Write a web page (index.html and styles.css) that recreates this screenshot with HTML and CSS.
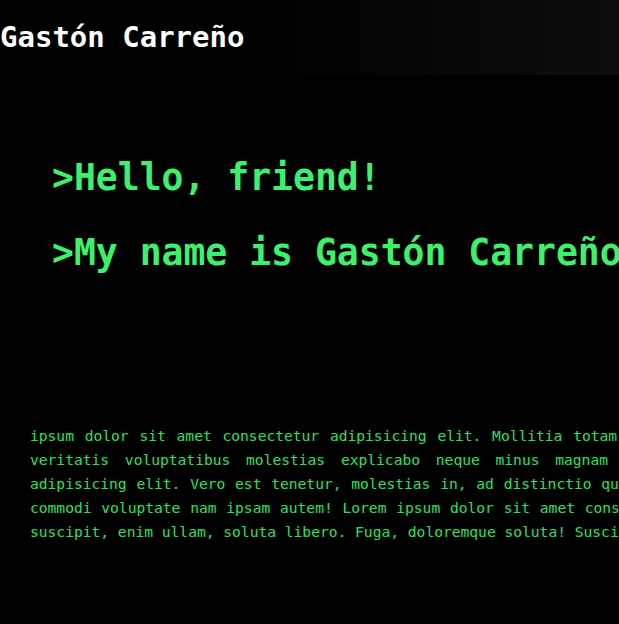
FILE: index.html
```html
<!DOCTYPE html>
<html lang="es">
<head>
<meta charset="utf-8">
<title>Gastón Carreño</title>
<link rel="stylesheet" href="styles.css">
</head>
<body>
<header class="topbar">
  <span class="brand">Gastón Carreño</span>
</header>
<main>
  <section class="hero">
    <h1 class="line">&gt;Hello, friend!</h1>
    <h1 class="line">&gt;My name is Gastón Carreño</h1>
  </section>
  <section class="about">
    <p class="text">
      <span class="row r1">ipsum dolor sit amet consectetur adipisicing elit. Mollitia totam</span>
      <span class="row r2">veritatis voluptatibus molestias explicabo neque minus magnam rem</span>
      <span class="row r3">adipisicing elit. Vero est tenetur, molestias in, ad distinctio quo</span>
      <span class="row r4">commodi voluptate nam ipsam autem! Lorem ipsum dolor sit amet consectetur</span>
      <span class="row r5">suscipit, enim ullam, soluta libero. Fuga, doloremque soluta! Suscipit</span>
    </p>
  </section>
</main>
</body>
</html>
```
FILE: styles.css
```css
html, body {
  margin: 0;
  padding: 0;
  background: #000;
  overflow: hidden;
}
body {
  font-family: "DejaVu Sans Mono", monospace;
  width: 619px;
  height: 624px;
}
.topbar {
  height: 75px;
  display: flex;
  align-items: center;
  background: linear-gradient(to right, #000 0%, #000 40%, #0e0c0e 100%);
}
.brand {
  color: #fff;
  font-weight: bold;
  font-size: 29px;
  line-height: 1;
  white-space: nowrap;
}
.hero {
  padding: 82px 0 0 52px;
  display: flex;
  flex-direction: column;
  gap: 33px;
}
.line {
  margin: 0;
  color: #3cf26a;
  font-size: 36.4px;
  line-height: 42px;
  font-weight: bold;
  white-space: nowrap;
}
.about {
  padding: 150px 0 0 30px;
}
.text {
  margin: 0;
  color: #2ee05a;
  font-size: 14.6px;
  line-height: 24px;
}
.row {
  display: block;
  white-space: nowrap;
}
.r1 { word-spacing: 2px; }
.r2 { word-spacing: 7px; }
.r3 { word-spacing: 1px; }
.r4 { word-spacing: 1px; }
.r5 { word-spacing: 0; }
```
